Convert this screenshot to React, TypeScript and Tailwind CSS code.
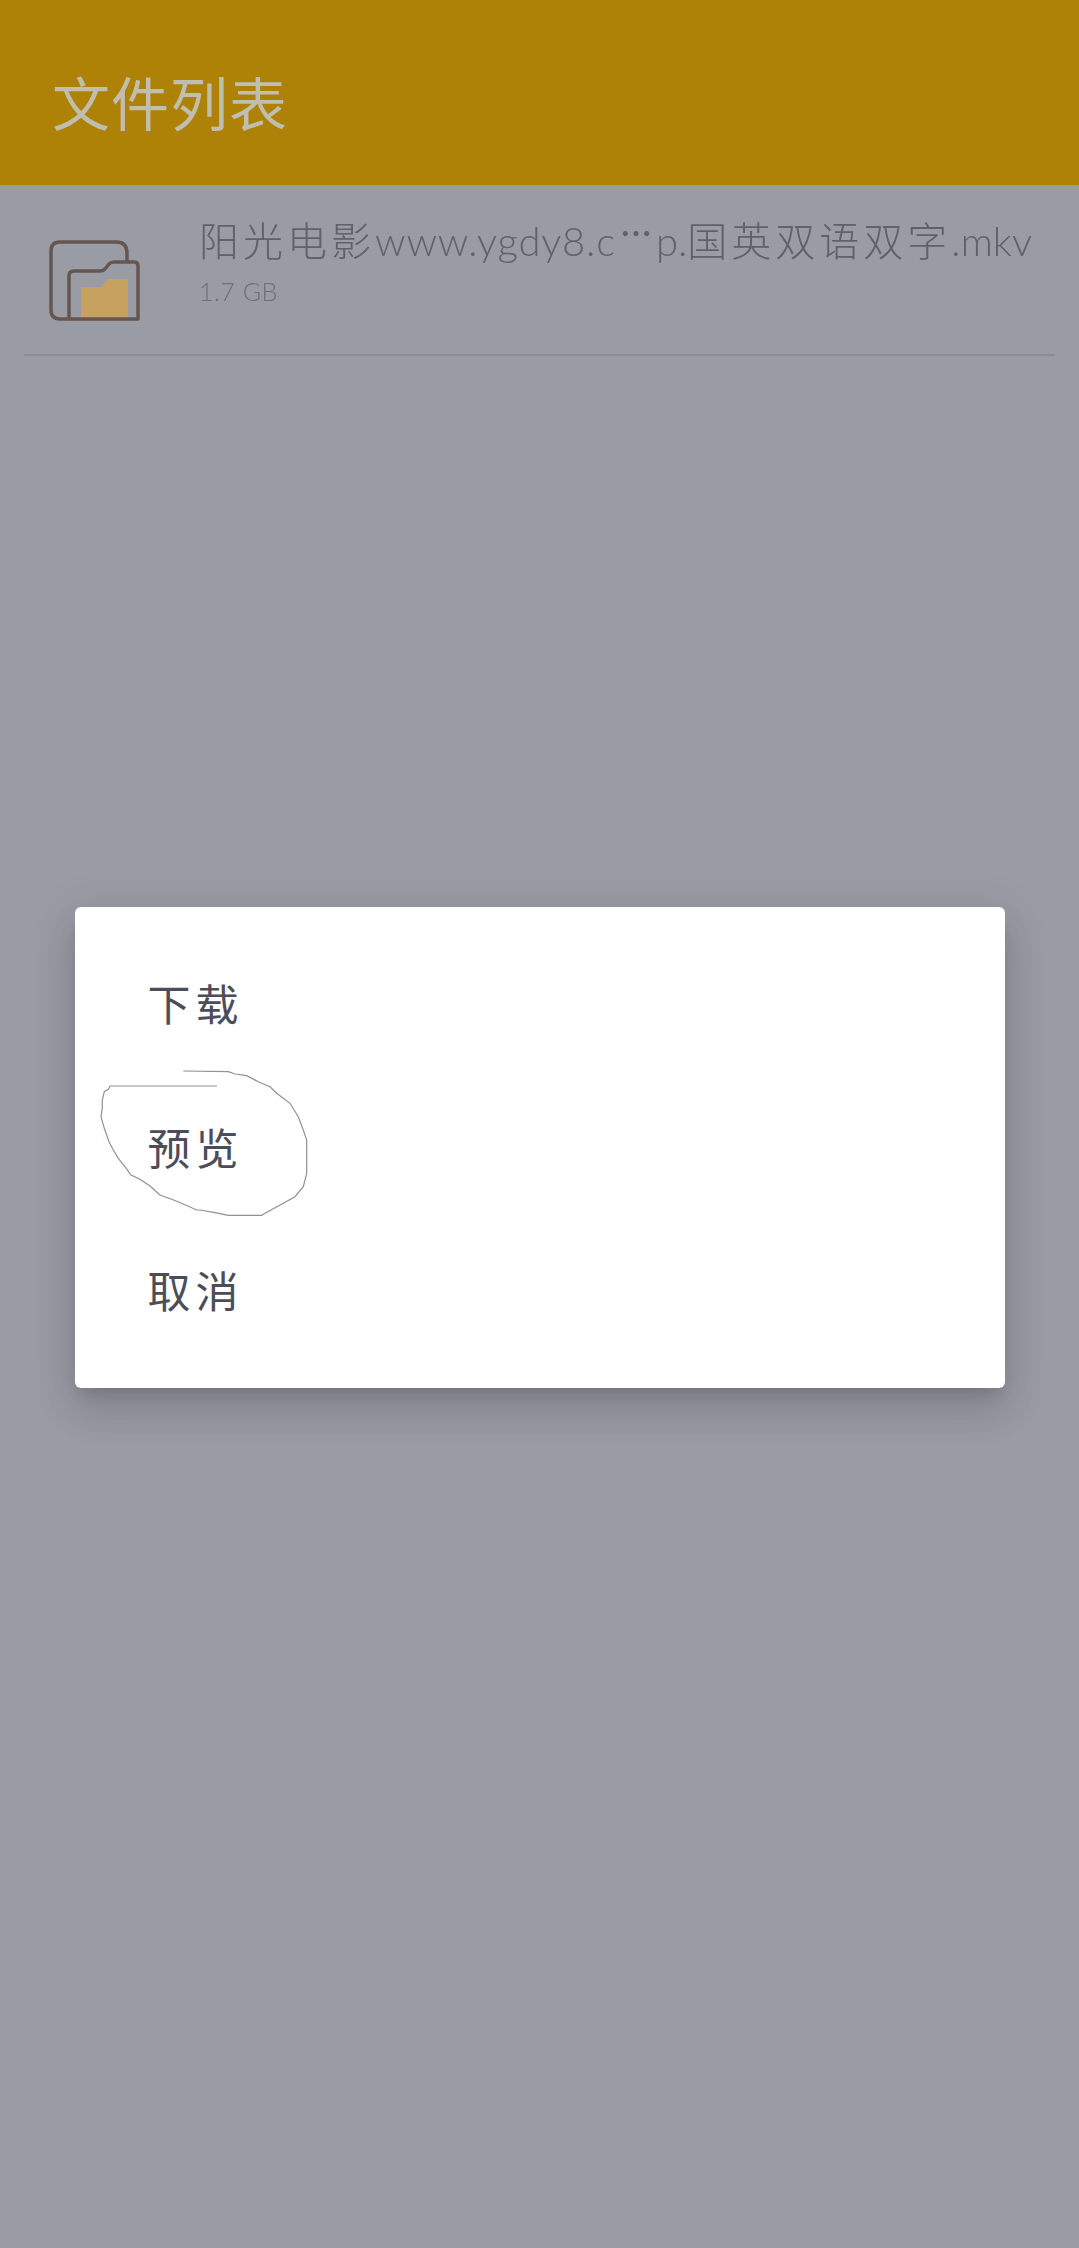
const font = 'font-["Lato","Noto_Sans_CJK_SC",sans-serif]';

// 圈出“预览”的手写标记
const scribble =
  'M183.3 1071 L228.3 1071.7 L235 1074 L246.7 1075.7 L258.3 1081.7 L270 1086.7 L276.7 1093.3 L290 1103.3 L298.3 1116.7 L303.3 1130 L306.7 1140 L306.7 1173.3 L303.3 1186.7 L295 1196.7 L283.3 1203.3 L265 1213.3 L261.7 1215.3 L228.3 1215.3 L215 1212.7 L200 1210 L196.7 1210 L183.3 1204 L171.7 1199.3 L160 1195 L150 1186 L140 1179.3 L131 1175 L125 1166.7 L118.3 1158.3 L113.3 1150 L109 1141.7 L104.3 1128.3 L101 1116.7 L102.3 1108 L102.3 1100 L104.3 1091.7 L108.3 1089.3 L110 1086 L217 1086';

function FolderIcon() {
  return (
    <svg className="blur-[0.6px]" width="100" height="92" viewBox="0 0 100 92" fill="none">
      <path d="M21 81 L12 81 Q3 81 3 72 L3 13 Q3 4 12 4 L68 4 Q79 4 79 15 L79 24" stroke="#65564f" strokeWidth="3.5" />
      <path d="M33 49 L54 49 L59 41 L80 41 L80 80 L33 80 Z" fill="#c6a160" />
      <path
        d="M21 81 L21 38 Q21 33 26 33 L52 33 Q55 33 57 31 L61 26 Q63 24 66 24 L86 24 Q90 24 90 28 L90 81 Z"
        stroke="#65564f"
        strokeWidth="3.5"
        strokeLinejoin="round"
      />
    </svg>
  );
}

function MenuItem({ label }: { label: string }) {
  return (
    <div className="flex h-[143.5px] items-center pl-[73px] text-[43px] leading-none tracking-[5px] text-[#4b4d58]">
      {label}
    </div>
  );
}

export default function App() {
  return (
    <div className={`relative h-[2248px] w-[1079px] overflow-hidden bg-[#999ca5] ${font}`}>
      <div className="flex h-[185px] items-center bg-[#ae8206] pt-[22px] pl-[52px]">
        <span className="text-[58px] leading-none tracking-[1px] text-[#bfbeb0] blur-[0.5px]">文件列表</span>
      </div>

      <div className="mx-[24px] flex h-[171px] border-b-2 border-[#8b8e97]">
        <div className="w-[175px] pl-[24px] pt-[53px]">
          <FolderIcon />
        </div>
        <div className="min-w-0 flex-1 pt-[32px] blur-[0.4px]">
          <div className="whitespace-nowrap text-[40px] leading-[48px] font-light text-[#5f626c]">
            <span className="tracking-[4px]">阳光电影</span>
            <span className="tracking-[0.8px]">www.ygdy8.c</span>
            <span className='mx-[4px] inline-block -translate-y-[10px] font-["Noto_Sans_CJK_SC",sans-serif] text-[32px] leading-none font-bold'>⋯</span>
            <span>p.</span>
            <span className="tracking-[4px]">国英双语双字</span>
            <span>.mkv</span>
          </div>
          <div className="mt-[12px] text-[25px] leading-[28px] font-light tracking-[0.5px] text-[#6c6f7a]">1.7 GB</div>
        </div>
      </div>

      {/* 弹窗 */}
      <div className="absolute inset-0 flex justify-center pt-[907px]">
        <div className="h-[481px] w-[930px] rounded-[6px] bg-white py-[26px] shadow-[0_11px_15px_-7px_rgba(0,0,0,0.14),0_24px_38px_3px_rgba(0,0,0,0.09),0_9px_46px_8px_rgba(0,0,0,0.08)]">
          <MenuItem label="下载" />
          <MenuItem label="预览" />
          <MenuItem label="取消" />
        </div>
      </div>

      <svg className="absolute inset-0" width="1079" height="2248" fill="none">
        <path d={scribble} stroke="#978c99" strokeWidth="1.2" />
      </svg>
    </div>
  );
}
